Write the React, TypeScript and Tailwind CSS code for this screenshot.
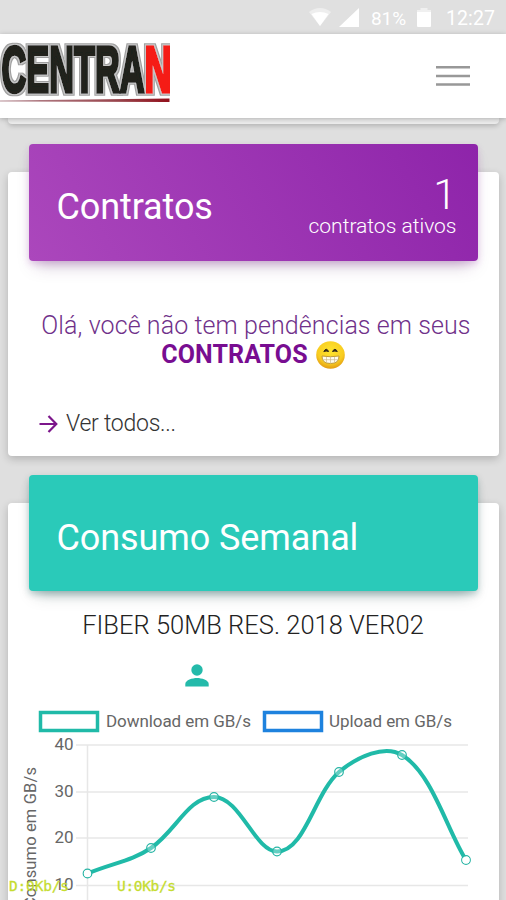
import type { ReactNode } from "react";

function StatusBar() {
  return (
    <div className="flex h-[34px] shrink-0 items-center justify-end bg-[#e0e0e0] pr-[10px] text-white">
      <svg width="22" height="18" viewBox="0 0 22 18" className="mr-[8px]">
        <path d="M0 4Q11-4 22 4L11 18Z" fill="#eeeeee" />
        <path d="M2.500 6Q11 2 19.500 6L11 18Z" fill="white" />
      </svg>
      <svg width="20" height="19" viewBox="0 0 20 19" className="mr-[12px]">
        <path d="M0 19L20 0V19Z" fill="white" />
      </svg>
      <span className="mr-[10px] w-[36px] whitespace-nowrap pt-[2px] text-[19px] leading-none tracking-[-0.1px]">81%</span>
      <svg width="14" height="19" viewBox="0 0 14 19" className="mr-[15px]">
        <path d="M3.500 2V0h7v2H14v3H0V2z" fill="#f0f0f0" />
        <path d="M0 4h14v14q0 1-1 1H1q-1 0-1-1z" fill="white" />
      </svg>
      <span className="w-[50px] whitespace-nowrap pt-[3px] text-[19.500px] leading-none tracking-[0.1px]">12:27</span>
    </div>
  );
}

function Logo() {
  return (
    <svg width="170" height="84" viewBox="0 0 170 84" className="block">
      <defs>
        <linearGradient id="rule" x1="0" x2="1">
          <stop offset="0" stopColor="#b89098" />
          <stop offset="0.7" stopColor="#98434b" />
          <stop offset="1" stopColor="#92111c" />
        </linearGradient>
        <filter id="bevel" filterUnits="userSpaceOnUse" x="0" y="0" width="169.500" height="84">
          <feMorphology in="SourceAlpha" operator="dilate" radius="2" result="outerShape" />
          <feFlood floodColor="#a0a0a0" />
          <feComposite in2="outerShape" operator="in" result="outer" />
          <feMorphology in="SourceAlpha" operator="dilate" radius="1" result="innerShape" />
          <feFlood floodColor="#c8c8c8" />
          <feComposite in2="innerShape" operator="in" result="inner" />
          <feMerge>
            <feMergeNode in="outer" />
            <feMergeNode in="inner" />
            <feMergeNode in="SourceGraphic" />
          </feMerge>
        </filter>
      </defs>
      <g
        filter="url(#bevel)"
        fontFamily="'Liberation Sans', Arial, sans-serif"
        fontWeight="700"
        fontSize="64.500"
        strokeWidth="3.600"
      >
        <text x="1.500" y="57.500" fill="#20211f" stroke="#20211f" textLength="143" lengthAdjust="spacingAndGlyphs">CENTRA</text>
        <text x="144.500" y="57.500" fill="#f51b13" stroke="#f51b13" textLength="27" lengthAdjust="spacingAndGlyphs">N</text>
      </g>
      <path d="M0 66.500L169.500 64.500V68L0 67.500Z" fill="url(#rule)" />
    </svg>
  );
}

function Header() {
  return (
    <header className="relative z-10 flex h-[84px] shrink-0 items-center justify-between bg-white pr-[36px] shadow-[0_1px_5px_rgba(0,0,0,0.25)]">
      <Logo />
      <svg width="34" height="22" viewBox="0 0 34 22" fill="#989898">
        <path d="M0 1h34v2.500H0zM0 9.800h34v2.500H0zM0 18.300h34v2.500H0z" />
      </svg>
    </header>
  );
}

function Card({ className, children }: { className: string; children: ReactNode }) {
  return (
    <section
      className={`mx-[7.500px] flex shrink-0 flex-col rounded-[4px] bg-white shadow-[0_3px_8px_rgba(0,0,0,0.2)] ${className}`}
    >
      {children}
    </section>
  );
}

function Emoji() {
  return (
    <svg width="29" height="28" viewBox="0 0 29 28" className="ml-[8px]">
      <defs>
        <radialGradient id="face" cx="50%" cy="35%" r="65%">
          <stop offset="0" stopColor="#ffe52e" />
          <stop offset="0.7" stopColor="#f8cc20" />
          <stop offset="1" stopColor="#e29b12" />
        </radialGradient>
      </defs>
      <ellipse cx="14.500" cy="14" rx="14.300" ry="13.700" fill="url(#face)" />
      <path d="M7.800 10.500q2.500-4.500 4.800 0q-2.400-1-4.800 0M16.500 10.500q2.500-4.500 4.800 0q-2.400-1-4.800 0" fill="#33291a" stroke="#33291a" strokeWidth="1" />
      <path d="M6 15q8.500 1.500 17 0q.3 7.500-8.500 7.500T6 15z" fill="#fffdf0" stroke="#c19a36" strokeWidth="1" />
      <path d="M6.500 18.700h16M10.500 16v6M14.500 16v6.500M18.500 16v6" stroke="#cbb98c" strokeWidth=".7" fill="none" />
    </svg>
  );
}

function ContractsCard() {
  return (
    <Card className="mt-[48px] h-[283.500px]">
      <div className="mx-[21px] -mt-[28px] flex h-[117px] shrink-0 justify-between rounded-[4px] bg-linear-[60deg,#ab47bc,#8e24aa] pr-[21px] pl-[28px] text-white shadow-[0_10px_16px_-7px_rgba(90,40,100,0.35),0_3px_7px_rgba(156,39,176,0.2)]">
        <h2 className="pt-[42px] text-[36px] leading-[42px] tracking-[-0.1px]">Contratos</h2>
        <div className="flex flex-col items-end pt-[31px] font-light">
          <span className="text-[42px] leading-[40px]">1</span>
          <span className="-mt-px text-[21px] leading-[25px] tracking-[0px]">contratos ativos</span>
        </div>
      </div>
      <div className="flex flex-col items-center pt-[50px] text-[#70318a]">
        <p className="pl-[6px] whitespace-nowrap text-[25px] leading-[30px] font-light tracking-[0.090px]">Olá, você não tem pendências em seus</p>
        <p className="flex items-center text-[25px] leading-[28px] font-bold tracking-[0.1px] text-[#780d91]">
          CONTRATOS
          <Emoji />
        </p>
      </div>
      <a className="mt-[40px] flex items-center pl-[31.500px] text-[#333]">
        <svg width="19" height="20" viewBox="0 0 19 20" fill="none" stroke="#7c168b" strokeWidth="2.200">
          <path d="M.5 10H17M9.500 2L17.300 10L9.500 18" />
        </svg>
        <span className="ml-[8px] text-[23px] leading-[30px] font-light tracking-[-0.250px]">Ver todos...</span>
      </a>
    </Card>
  );
}

const GRID = [
  { label: "40", y: 45 },
  { label: "30", y: 92 },
  { label: "20", y: 138 },
  { label: "10", y: 185.500 },
];

const POINTS = [
  [87.500, 173.500],
  [151, 148],
  [214, 97],
  [277, 151.500],
  [339, 72],
  [402, 55],
  [466, 160],
];

function Chart() {
  return (
    <svg width="506" height="200" viewBox="0 0 506 200" className="block shrink-0" fontFamily="Roboto, sans-serif" fill="#666">
      <rect x="40.500" y="12.500" width="57" height="18" fill="white" stroke="#20baa8" strokeWidth="3.500" />
      <text x="106" y="27" fontSize="17" textLength="145">Download em GB/s</text>
      <rect x="264.500" y="12.500" width="57" height="18" fill="white" stroke="#1e82de" strokeWidth="3.500" />
      <text x="329" y="27" fontSize="17" textLength="123">Upload em GB/s</text>
      <g stroke="#e7e7e7" strokeWidth="1.500">
        {GRID.map((g) => (
          <line key={g.label} x1="76" x2="468" y1={g.y} y2={g.y} />
        ))}
        <line x1="87.500" x2="87.500" y1="45" y2="200" />
      </g>
      {GRID.map((g) => (
        <text key={g.label} x="73.500" y={g.y + 4.500} fontSize="17" textAnchor="end">{g.label}</text>
      ))}
      <text transform="translate(35.500 208) rotate(-90)" fontSize="16.500" textLength="141">Consumo em GB/s</text>
      <path
        d="M87.500 173.500C113 163 132 161 151 148C176 131 188 97 214 97C240 97 255 151.500 277 151.500C305 151.500 314 94 339 72C358 56 385 44.500 402 55C432 73 447 130 466 160"
        fill="none"
        stroke="#20baa8"
        strokeWidth="4"
      />
      <g fill="white" fillOpacity=".3" stroke="#28b5a5" strokeWidth="1.200">
        {POINTS.map(([x, y]) => (
          <circle key={x} cx={x} cy={y} r="4.300" />
        ))}
      </g>
      <circle cx="87.500" cy="173.500" r="3.600" fill="white" />
      <circle cx="466" cy="160" r="3.600" fill="white" />
      <g fontFamily="'DejaVu Sans Mono', monospace" fontSize="14.500" fill="#c5dc2f" stroke="#c5dc2f" strokeWidth=".3">
        <text x="9" y="191" textLength="60">D:0Kb/s</text>
        <text x="117" y="191" textLength="59">U:0Kb/s</text>
      </g>
    </svg>
  );
}

function UsageCard() {
  return (
    <Card className="mt-[47.500px] h-[420px]">
      <div className="mx-[21px] -mt-[28px] h-[116px] shrink-0 rounded-[4px] bg-[#2acab9] pl-[28px] text-white shadow-[0_9px_15px_-7px_rgba(0,50,50,0.35),0_3px_7px_rgba(0,80,80,0.25)]">
        <h2 className="pt-[42px] text-[36px] leading-[42px] tracking-[-0.090px]">Consumo Semanal</h2>
      </div>
      <p className="mt-[19px] text-center text-[25.500px] leading-[30px] font-light whitespace-nowrap text-[#222]">FIBER 50MB RES. 2018 VER02</p>
      <svg width="24" height="24" viewBox="0 0 24 24" className="mt-[24px] ml-[177px] shrink-0" fill="#24baaa">
        <circle cx="12" cy="6" r="5.700" />
        <path d="M.3 22.500V20C.3 16 7.500 14 12 14S23.700 16 23.700 20V22.500Z" />
      </svg>
      <div className="mt-[12px] -ml-[7.500px]">
        <Chart />
      </div>
    </Card>
  );
}

export default function App() {
  return (
    <main className="flex h-[900px] w-[506px] flex-col overflow-hidden bg-[#dfdfdf] font-['Roboto',sans-serif]">
      <StatusBar />
      <Header />
      <div className="mx-[7.500px] h-[6px] shrink-0 rounded-b-[4px] bg-[#ececec] shadow-[0_2px_5px_rgba(0,0,0,0.2)]" />
      <ContractsCard />
      <UsageCard />
    </main>
  );
}
